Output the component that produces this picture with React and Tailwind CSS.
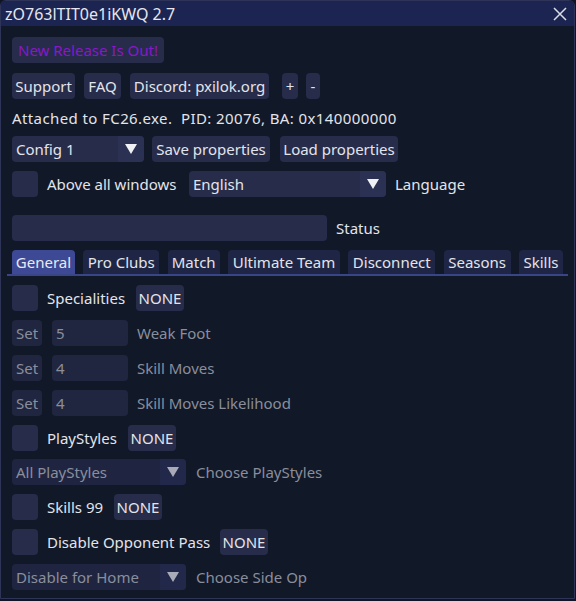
import React from 'react';

const FONT = { fontFamily: '"Noto Sans", "Open Sans", sans-serif' };

function Btn({ children, className = '', dim = false }) {
  return (
    <div
      className={
        'h-[26px] px-[4px] flex items-center justify-center whitespace-nowrap rounded-[4px] shrink-0 ' +
        (dim ? 'bg-[#20263f] text-[#8a8e9c] ' : 'bg-[#262c4a] text-[#e3e4ea] ') +
        className
      }
    >
      {children}
    </div>
  );
}

function Check() {
  return <div className="w-[26px] h-[26px] rounded-[4px] bg-[#262c4a] shrink-0" />;
}

function Combo({ value, width, dim = false }) {
  return (
    <div
      className={
        'h-[26px] flex items-center rounded-[4px] shrink-0 overflow-hidden ' +
        (dim ? 'bg-[#1f2540] text-[#8a8e9c]' : 'bg-[#262c4a] text-[#e3e4ea]')
      }
      style={{ width }}
    >
      <div className="flex-1 px-[4px] whitespace-nowrap">{value}</div>
      <div
        className={
          'w-[26px] h-full flex items-center justify-center ' +
          (dim ? 'bg-[#22284a]' : 'bg-[#2a3152]')
        }
      >
        <svg width="14" height="12" viewBox="0 0 14 12">
          <polygon points="1,1 13,1 7,11" fill={dim ? '#a9acb8' : '#f0f1f5'} />
        </svg>
      </div>
    </div>
  );
}

function Row({ children, className = '' }) {
  return <div className={'flex items-center gap-[8px] ' + className}>{children}</div>;
}

function SetRow({ value, label }) {
  return (
    <Row className="mt-[9px]">
      <Btn dim className="w-[30px]">Set</Btn>
      <div className="w-[76px] h-[26px] rounded-[4px] bg-[#20263f] text-[#8a8e9c] px-[4px] flex items-center ml-[2px]">
        {value}
      </div>
      <span className="text-[#8a8e9c] whitespace-nowrap ml-[1px]">{label}</span>
    </Row>
  );
}

function CheckRow({ label, labelW }) {
  return (
    <Row className="mt-[9px]">
      <Check />
      <span className="text-[#e3e4ea] ml-[1px] whitespace-nowrap" style={{ width: labelW }}>
        {label}
      </span>
      <Btn className="w-[48px]">NONE</Btn>
    </Row>
  );
}

const tabs = [
  ['General', 63],
  ['Pro Clubs', 76],
  ['Match', 52],
  ['Ultimate Team', 112],
  ['Disconnect', 87],
  ['Seasons', 67],
  ['Skills', 44],
];

export default function App() {
  return (
    <div className="w-[576px] h-[601px] bg-[#0f1526] text-[15px] leading-[20px]" style={FONT}>
      <div className="w-[575px] h-[599px] rounded-t-[6px] border border-[#2d3457] bg-[#111828] flex flex-col overflow-hidden">
        {/* title bar */}
        <div className="h-[25px] bg-[#1c2451] flex items-center justify-between pl-[4px] pr-[7px] text-[#e6e7ee] text-[16px]">
          <span>zO763lTIT0e1iKWQ 2.7</span>
          <svg width="14" height="14" viewBox="0 0 14 14">
            <path d="M1 1 L13 13 M13 1 L1 13" stroke="#d9dbe6" strokeWidth="1.5" />
          </svg>
        </div>

        <div className="flex flex-col px-[11px]">
          <Row className="mt-[11px]">
            <Btn className="w-[152px]">
              <span className="text-[#8a17c9]">New Release Is Out!</span>
            </Btn>
          </Row>

          <div className="mt-[10px] flex items-center">
            <Btn className="w-[63px]">Support</Btn>
            <Btn className="w-[37px] ml-[9px]">FAQ</Btn>
            <Btn className="w-[139px] ml-[9px]">Discord: pxilok.org</Btn>
            <Btn className="w-[16px] ml-[13px]">+</Btn>
            <Btn className="w-[14px] ml-[8px]">-</Btn>
          </div>

          <div className="mt-[9px] h-[20px] text-[#e3e4ea] whitespace-pre tracking-[0.4px]">
            Attached to FC26.exe.  PID: 20076, BA: 0x140000000
          </div>

          <Row className="mt-[8px]">
            <Combo value="Config 1" width={132} />
            <Btn className="w-[118px]">Save properties</Btn>
            <Btn className="w-[118px] ml-[2px]">Load properties</Btn>
          </Row>

          <Row className="mt-[9px]">
            <Check />
            <span className="text-[#e3e4ea] ml-[1px] w-[134px] whitespace-nowrap">Above all windows</span>
            <Combo value="English" width={197} />
            <span className="text-[#e3e4ea] ml-[1px]">Language</span>
          </Row>

          <Row className="mt-[18px]">
            <div className="w-[315px] h-[26px] rounded-[4px] bg-[#262c4a]" />
            <span className="text-[#e3e4ea] ml-[1px]">Status</span>
          </Row>

          {/* tabs */}
          <div className="mt-[9px] -mx-[5px] px-[5px] border-b-2 border-[#3a4587] flex items-end gap-[8.5px] w-[561px]">
            {tabs.map(([t, w], i) => (
              <div
                key={t}
                style={{ width: w }}
                className={
                  'h-[24px] flex items-center justify-center rounded-t-[4px] whitespace-nowrap ' +
                  (i === 0 ? 'bg-[#3e4995] text-[#e8e9f2]' : 'bg-[#1f2645] text-[#e3e4ea]')
                }
              >
                {t}
              </div>
            ))}
          </div>

          <CheckRow label="Specialities" labelW={81} />

          <SetRow value="5" label="Weak Foot" />
          <SetRow value="4" label="Skill Moves" />
          <SetRow value="4" label="Skill Moves Likelihood" />

          <CheckRow label="PlayStyles" labelW={73} />

          <Row className="mt-[8px]">
            <Combo value="All PlayStyles" width={174} dim />
            <span className="text-[#8a8e9c] ml-[2px]">Choose PlayStyles</span>
          </Row>

          <CheckRow label="Skills 99" labelW={59} />
          <CheckRow label="Disable Opponent Pass" labelW={165} />

          <Row className="mt-[9px]">
            <Combo value="Disable for Home" width={174} dim />
            <span className="text-[#8a8e9c] ml-[2px]">Choose Side Op</span>
          </Row>
        </div>
      </div>
    </div>
  );
}
